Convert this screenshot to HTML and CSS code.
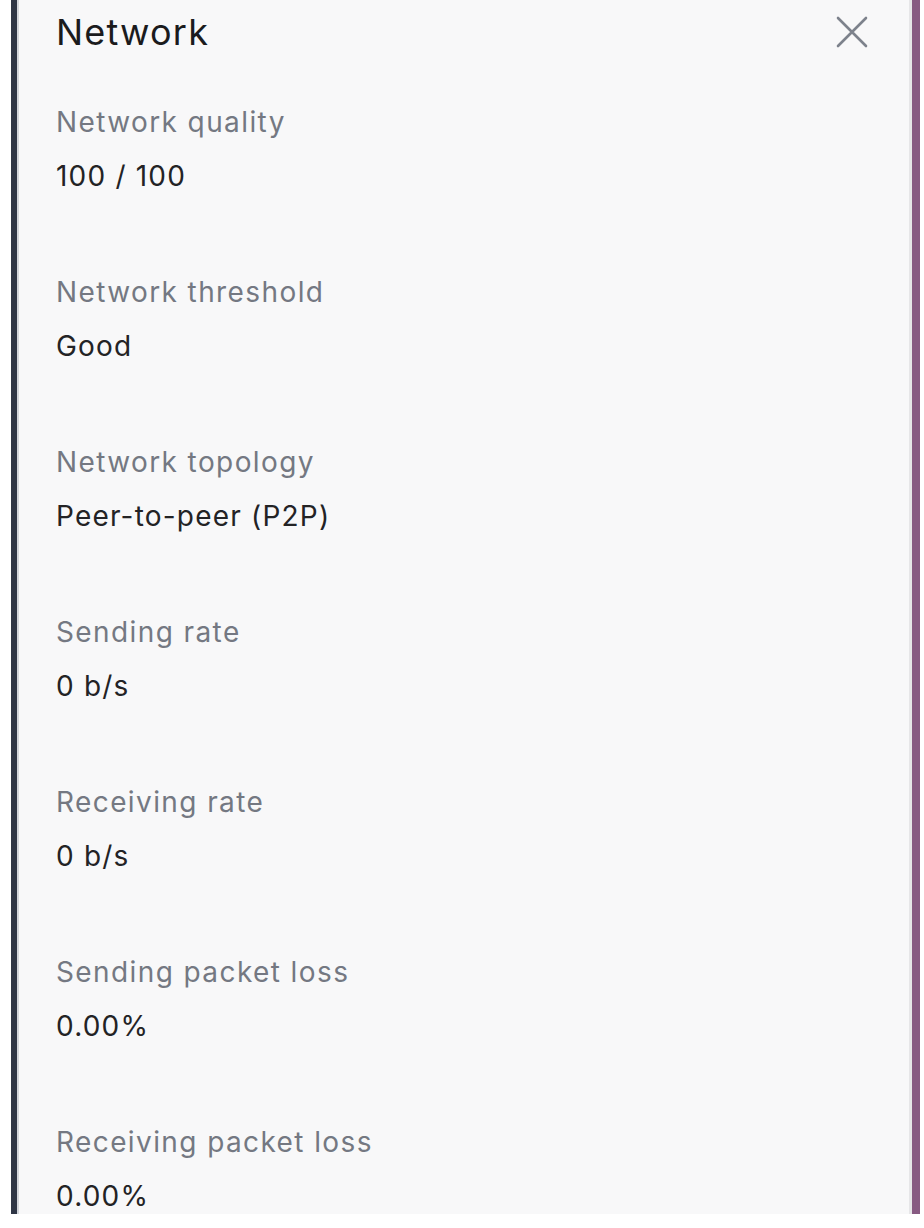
FILE: index.html
```html
<!DOCTYPE html>
<html lang="en">
<head>
  <meta charset="UTF-8">
  <meta name="viewport" content="width=device-width, initial-scale=1.0">
  <title>Network</title>
  <link rel="stylesheet" href="styles.css">
</head>
<body>
  <div class="frame">
    <!-- Network stats side panel -->
    <div class="panel">
      <div class="panel-header">
        <h2>Network</h2>
        <button class="close" aria-label="Close">
          <svg width="32" height="32" viewBox="0 0 32 32">
            <path d="M2 2 L30 30 M30 2 L2 30" stroke="#7d828c" stroke-width="2.6" stroke-linecap="round" fill="none"/>
          </svg>
        </button>
      </div>

      <div class="stat">
        <div class="label">Network quality</div>
        <div class="value">100 / 100</div>
      </div>
      <div class="stat">
        <div class="label">Network threshold</div>
        <div class="value">Good</div>
      </div>
      <div class="stat">
        <div class="label">Network topology</div>
        <div class="value">Peer-to-peer (P2P)</div>
      </div>
      <div class="stat">
        <div class="label">Sending rate</div>
        <div class="value">0 b/s</div>
      </div>
      <div class="stat">
        <div class="label">Receiving rate</div>
        <div class="value">0 b/s</div>
      </div>
      <div class="stat">
        <div class="label">Sending packet loss</div>
        <div class="value">0.00%</div>
      </div>
      <div class="stat">
        <div class="label">Receiving packet loss</div>
        <div class="value">0.00%</div>
      </div>
    </div>
  </div>
</body>
</html>
```

FILE: styles.css
```css
body {
  font-family: Inter, "Noto Sans", sans-serif;
  margin: 0;
  padding: 0;
  background-color: #ffffff;
}
.frame {
  width: 924px;
  height: 1228px;
  overflow: hidden;
}
.panel {
  margin-left: 11px;
  width: 909px;
  height: 1214px;
  box-sizing: border-box;
  background: #f8f8f9;
  border-left: 6px solid #2e3545;
  border-right: 8px solid #875a82;
  box-shadow: inset 2px 0 0 #d2d5db, inset -3px 0 0 #e6e6e8;
  padding: 0 0 0 39px;
}
.panel-header {
  display: flex;
  align-items: center;
  justify-content: space-between;
  height: 64px;
  padding-right: 44px;
}
h2 {
  margin: 0;
  color: #1b1b1d;
  font-size: 36px;
  font-weight: 400;
  letter-spacing: 1.2px;
}
.close {
  background: none;
  border: none;
  padding: 0;
  cursor: pointer;
  display: flex;
}
.stat {
  margin-top: 40px;
  margin-bottom: 80px;
}
.stat + .stat {
  margin-top: 0;
}
.label {
  color: #747882;
  font-size: 28px;
  line-height: 36px;
  letter-spacing: 1.4px;
}
.value {
  color: #232325;
  font-size: 28px;
  line-height: 36px;
  letter-spacing: 1.2px;
  margin-top: 18px;
}
```
